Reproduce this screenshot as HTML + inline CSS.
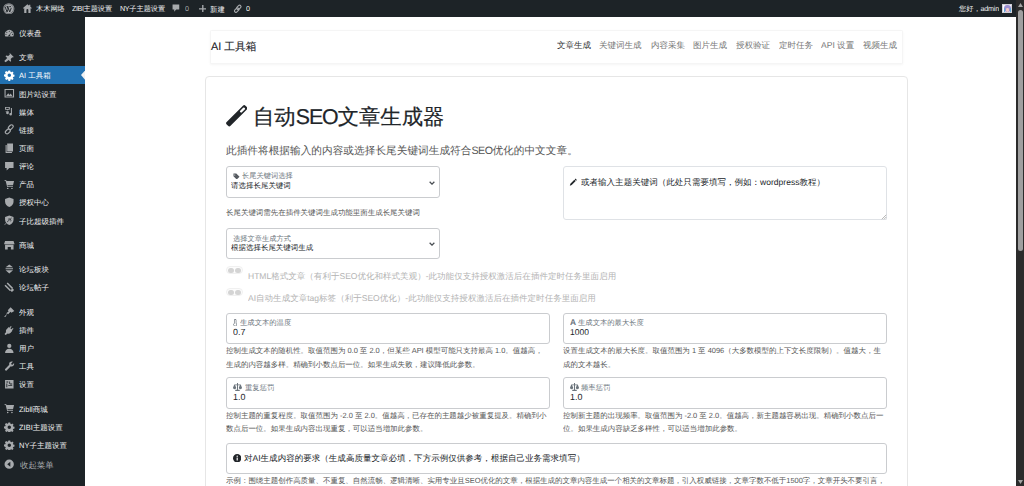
<!DOCTYPE html>
<html><head><meta charset="utf-8">
<style>
*{box-sizing:border-box;margin:0;padding:0}
html,body{width:1024px;height:486px;overflow:hidden;background:#fff;font-family:"Liberation Sans",sans-serif;color:#333}
.abs{position:absolute;white-space:nowrap}
.t{position:absolute;white-space:nowrap;transform:scale(0.125);transform-origin:0 0;text-rendering:geometricPrecision}
#bar{position:absolute;left:0;top:0;width:1016px;height:17.07px;background:#1d2327}
#side{position:absolute;left:0;top:17px;width:85.33px;height:469px;background:#1d2327}
.ic{position:absolute;fill:#a7aaad}
#sb{position:absolute;left:1016px;top:0;width:8px;height:486px;background:#2b2b2b}
.card{position:absolute;border:1px solid #e3e3e3;border-radius:4px;background:#fff}
.fl{position:absolute;border:1px solid #cacccf;border-radius:3px;background:#fff}
</style></head><body>
<div id="bar"><svg class="abs" style="left:3.3px;top:2.7px;width:11.6px;height:11.6px" viewBox="0 0 20 20"><circle cx="10" cy="10" r="9.600" fill="#a7aaad"/><circle cx="10" cy="10" r="8.300" fill="none" stroke="#1d2327" stroke-width="0.700"/><path d="M3.600 6.300L7 15.500 8.800 10.600 7.500 6.300M8.200 6.300L11.600 15.500 14.300 8.400M6.200 6.300h3.200M10.800 6.300h3" fill="none" stroke="#1d2327" stroke-width="1.600"/></svg><svg class="abs" style="left:23.2px;top:3.9px;width:8.8px;height:9.4px" viewBox="0 0 18 19"><path fill="#a7aaad" d="M9 0.500L0 8.300l1.300 1.400L2.500 8.700V18.500h13V8.700l1.200 1L18 8.300l-3-2.600V1.500h-2.500v2.100zM7 12.200a2 2 0 0 1 4 0v6.300H7z"/></svg><span class="t" style="left:35.80px;top:4.10px;font-size:57.60px;line-height:80.00px;color:#f0f0f1;">木木网络</span><span class="t" style="left:71.70px;top:4.10px;font-size:57.60px;line-height:80.00px;color:#f0f0f1;"><span style="letter-spacing:-3.5px">ZIBI</span>主题设置</span><span class="t" style="left:119.50px;top:4.10px;font-size:57.60px;line-height:80.00px;color:#f0f0f1;"><span style="letter-spacing:-3px">NY</span>子主题设置</span><svg class="abs" style="left:172.2px;top:4.3px;width:7.8px;height:8.6px" viewBox="0 0 16 18"><path fill="#a7aaad" d="M1 1h14v10.500H8.500L4.500 16v-4.500H1z"/></svg><span class="t" style="left:185.00px;top:4.10px;font-size:57.60px;line-height:80.00px;color:#a7aaad;">0</span><svg class="abs" style="left:198.6px;top:4.8px;width:7.6px;height:7.6px" viewBox="0 0 16 16"><path fill="#a7aaad" d="M6.600 0h2.800v6.600H16v2.800H9.400V16H6.600V9.400H0V6.600h6.600z"/></svg><span class="t" style="left:210.30px;top:4.10px;font-size:59.20px;line-height:80.00px;color:#f0f0f1;">新建</span><svg class="abs" style="left:233px;top:3.8px;width:9.5px;height:9.5px" viewBox="0 0 20 20"><g fill="none" stroke="#a7aaad" stroke-width="2.400"><rect x="9.300" y="1.800" width="6" height="10.500" rx="3" transform="rotate(45 12.300 7)"/><rect x="4.700" y="7.700" width="6" height="10.500" rx="3" transform="rotate(45 7.700 13)"/></g></svg><span class="t" style="left:245.90px;top:4.10px;font-size:57.60px;line-height:80.00px;color:#f0f0f1;">0</span><span class="t" style="left:958.70px;top:4.10px;font-size:57.60px;line-height:80.00px;color:#f0f0f1;">您好，<span style="letter-spacing:-2px">admin</span></span><div class="abs" style="left:1002px;top:3.6px;width:9.6px;height:9.6px;background:#f7f7fb;border:0.600px solid #cfcfd6;overflow:hidden"><div style="position:absolute;left:1.300px;top:0.900px;width:6.400px;height:6.800px;border-radius:50%;background:#9b8fd0"></div><div style="position:absolute;left:2.600px;top:3.500px;width:3.800px;height:3.600px;border-radius:50%;background:#f3c9c2"></div><div style="position:absolute;left:0.800px;top:3.600px;width:1.400px;height:4px;border-radius:1px;background:#5aa9d8"></div><div style="position:absolute;left:6.800px;top:3.600px;width:1.400px;height:4px;border-radius:1px;background:#5aa9d8"></div></div></div>
<div id="side"></div>
<svg class="abs" style="left:4.2px;top:27.50px;width:10.6px;height:10.6px;fill:#a7aaad" viewBox="0 0 20 20"><path d="M10 3.500a8.500 8.500 0 0 0-7.400 12.700h14.800A8.500 8.500 0 0 0 10 3.500zm0 1.800a1 1 0 1 1 0 2 1 1 0 0 1 0-2zM5.300 7.200a1 1 0 1 1 0 2 1 1 0 0 1 0-2zm9.400 0a1 1 0 1 1 0 2 1 1 0 0 1 0-2zM3.700 11a1 1 0 1 1 0 2 1 1 0 0 1 0-2zm12.600 0a1 1 0 1 1 0 2 1 1 0 0 1 0-2zM13.300 8l-2.100 5.500a1.800 1.800 0 1 1-1.400-.4z"/></svg>
<span class="t" style="left:19.10px;top:27.90px;font-size:60.00px;line-height:80.00px;color:#f0f0f1;">仪表盘</span>
<svg class="abs" style="left:4.2px;top:51.93px;width:10.6px;height:10.6px;fill:#a7aaad" viewBox="0 0 20 20"><path d="M10.400 1.600l8 8-1.400.8-1.200-.6-3.200 3.300.9 3.800-1.400 1.400-3.300-3.300L3 19.500.5 17l5.600-5.800L2.800 7.900l1.400-1.400 3.800.9 3.300-3.200-.6-1.200z"/></svg>
<span class="t" style="left:19.10px;top:52.33px;font-size:60.00px;line-height:80.00px;color:#f0f0f1;">文章</span>
<div class="abs" style="left:0;top:65.8px;width:85.33px;height:18.3px;background:#2271b1"></div>
<svg class="abs" style="left:81px;top:69.6px;width:4.4px;height:10.2px" viewBox="0 0 10 20" preserveAspectRatio="none"><path d="M10 0L0 10l10 10z" fill="#f0f0f1"/></svg>
<svg class="abs" style="left:4.2px;top:70.06px;width:10.6px;height:10.6px;fill:#fff" viewBox="0 0 20 20"><path d="M8.300 1h3.400l.5 2.500 1.400.6 2.100-1.400 2.400 2.400-1.400 2.100.6 1.400 2.500.5v3.400l-2.500.5-.6 1.400 1.400 2.100-2.400 2.400-2.100-1.400-1.400.6-.5 2.500H8.300l-.5-2.500-1.400-.6-2.100 1.400-2.400-2.400 1.400-2.100-.6-1.400L0 11.700V8.300l2.500-.5.6-1.400-1.400-2.100 2.400-2.400 2.100 1.400 1.400-.6zM10 6.700a3.300 3.300 0 1 0 0 6.600 3.300 3.300 0 0 0 0-6.600z"/></svg>
<span class="t" style="left:19.10px;top:70.46px;font-size:60.00px;line-height:80.00px;color:#fff;">AI 工具箱</span>
<svg class="abs" style="left:4.2px;top:88.19px;width:10.6px;height:10.6px;fill:#a7aaad" viewBox="0 0 20 20"><path d="M1 2h18v16H1zm2 2v12h14V4zm1 11l4-5 2.500 3 2-2.500L16 15z"/></svg>
<span class="t" style="left:19.10px;top:88.59px;font-size:60.00px;line-height:80.00px;color:#f0f0f1;">图片站设置</span>
<svg class="abs" style="left:4.2px;top:106.32px;width:10.6px;height:10.6px;fill:#a7aaad" viewBox="0 0 20 20"><path d="M2 2h9v5H8l-1 2-1-2H2zm2 1.500v2h5v-2zM13 4h2v11.500a2.500 2.500 0 1 1-2-2.400zM3 10h6v3a2.500 2.500 0 1 1-2-2.400V11H3z"/></svg>
<span class="t" style="left:19.10px;top:106.72px;font-size:60.00px;line-height:80.00px;color:#f0f0f1;">媒体</span>
<svg class="abs" style="left:4.2px;top:124.45px;width:10.6px;height:10.6px;fill:#a7aaad" viewBox="0 0 20 20"><g fill="none" stroke="#a7aaad" stroke-width="2.200"><rect x="9.600" y="0.800" width="6.400" height="10.400" rx="3.200" transform="rotate(45 12.800 6)"/><rect x="4" y="8.800" width="6.400" height="10.400" rx="3.200" transform="rotate(45 7.200 14)"/></g></svg>
<span class="t" style="left:19.10px;top:124.85px;font-size:60.00px;line-height:80.00px;color:#f0f0f1;">链接</span>
<svg class="abs" style="left:4.2px;top:142.58px;width:10.6px;height:10.6px;fill:#a7aaad" viewBox="0 0 20 20"><path d="M6 1h11v15H6zM3 4h2v13h10v2H3z"/></svg>
<span class="t" style="left:19.10px;top:142.98px;font-size:60.00px;line-height:80.00px;color:#f0f0f1;">页面</span>
<svg class="abs" style="left:4.2px;top:160.71px;width:10.6px;height:10.6px;fill:#a7aaad" viewBox="0 0 20 20"><path d="M2 2h16v11H10l-5 5v-5H2z"/></svg>
<span class="t" style="left:19.10px;top:161.11px;font-size:60.00px;line-height:80.00px;color:#f0f0f1;">评论</span>
<svg class="abs" style="left:4.2px;top:178.84px;width:10.6px;height:10.6px;fill:#a7aaad" viewBox="0 0 20 20"><path d="M1 2h3l.800 2H19l-2 8H6.500l.500 1.500h10v1.500H6L3 3.500H1zm6 14.500a1.500 1.500 0 1 1 0 3 1.500 1.500 0 0 1 0-3zm8 0a1.500 1.500 0 1 1 0 3 1.500 1.500 0 0 1 0-3z"/></svg>
<span class="t" style="left:19.10px;top:179.24px;font-size:60.00px;line-height:80.00px;color:#f0f0f1;">产品</span>
<svg class="abs" style="left:4.2px;top:196.97px;width:10.6px;height:10.6px;fill:#a7aaad" viewBox="0 0 20 20"><path d="M10 1l8 3v5c0 5-3.500 8.500-8 10-4.500-1.500-8-5-8-10V4z"/></svg>
<span class="t" style="left:19.10px;top:197.37px;font-size:60.00px;line-height:80.00px;color:#f0f0f1;">授权中心</span>
<svg class="abs" style="left:4.2px;top:215.10px;width:10.6px;height:10.6px;fill:#a7aaad" viewBox="0 0 20 20"><path d="M10 1l8 3v5c0 5-3.500 8.500-8 10-4.500-1.500-8-5-8-10V4z"/><path d="M5.500 13.500L14.500 5.500M7.500 8.500a3 3 0 0 1 5 3.500" fill="none" stroke="#1d2327" stroke-width="1.300"/><path d="M1 19L5 14" stroke="#a7aaad" stroke-width="1.200"/></svg>
<span class="t" style="left:19.10px;top:215.50px;font-size:60.00px;line-height:80.00px;color:#f0f0f1;">子比超级插件</span>
<svg class="abs" style="left:4.2px;top:239.53px;width:10.6px;height:10.6px;fill:#a7aaad" viewBox="0 0 20 20"><path d="M2 2h16l2 6H0zm0 7h16v9h-5v-5H7v5H2z"/></svg>
<span class="t" style="left:19.10px;top:239.93px;font-size:60.00px;line-height:80.00px;color:#f0f0f1;">商城</span>
<svg class="abs" style="left:4.2px;top:263.96px;width:10.6px;height:10.6px;fill:#a7aaad" viewBox="0 0 20 20"><path d="M10 1l7 5H3zM3 8h14v2H3zm0 4h14l-7 6z"/></svg>
<span class="t" style="left:19.10px;top:264.36px;font-size:60.00px;line-height:80.00px;color:#f0f0f1;">论坛板块</span>
<svg class="abs" style="left:4.2px;top:282.09px;width:10.6px;height:10.6px;fill:#a7aaad" viewBox="0 0 20 20"><path d="M7 1l10 10-2 2L5 3zM3 5l10 10-2 2L1 7zm13 7l3 3-4 4-3-3z"/></svg>
<span class="t" style="left:19.10px;top:282.49px;font-size:60.00px;line-height:80.00px;color:#f0f0f1;">论坛帖子</span>
<svg class="abs" style="left:4.2px;top:306.52px;width:10.6px;height:10.6px;fill:#a7aaad" viewBox="0 0 20 20"><path d="M12.500 0.500l7 7-5.500 3.500-1.800-1.800-4.200 4.500-1.300-1.300L2.200 19.500 0.500 17.800l5.200-4.500-1.300-1.300 4.500-4.200L7.100 6z"/></svg>
<span class="t" style="left:19.10px;top:306.92px;font-size:60.00px;line-height:80.00px;color:#f0f0f1;">外观</span>
<svg class="abs" style="left:4.2px;top:324.65px;width:10.6px;height:10.6px;fill:#a7aaad" viewBox="0 0 20 20"><path d="M13 2l1.500 1.500L12 6l2 2 2.500-2.500L18 7l-3 3 1 1-4 4c-1.500 1.500-3.500 1.800-5 1L3 19l-2-2 3-4c-.800-1.500-.500-3.500 1-5l4-4 1 1z"/></svg>
<span class="t" style="left:19.10px;top:325.05px;font-size:60.00px;line-height:80.00px;color:#f0f0f1;">插件</span>
<svg class="abs" style="left:4.2px;top:342.78px;width:10.6px;height:10.6px;fill:#a7aaad" viewBox="0 0 20 20"><path d="M10 1.500a4 4 0 1 1 0 8 4 4 0 0 1 0-8zM2 19c0-4.500 3-8 8-8s8 3.500 8 8z"/></svg>
<span class="t" style="left:19.10px;top:343.18px;font-size:60.00px;line-height:80.00px;color:#f0f0f1;">用户</span>
<svg class="abs" style="left:4.2px;top:360.91px;width:10.6px;height:10.6px;fill:#a7aaad" viewBox="0 0 20 20"><path d="M16.500 1.500l-3 3 .500 2 2 .500 3-3c.800 2.800-.800 6-4 6.300-.800.100-1.500 0-2.200-.300L5 17.800a2 2 0 0 1-2.800-2.800l7.800-7.800c-.300-.700-.400-1.400-.300-2.200.300-3.200 3.500-4.800 6.300-4z"/></svg>
<span class="t" style="left:19.10px;top:361.31px;font-size:60.00px;line-height:80.00px;color:#f0f0f1;">工具</span>
<svg class="abs" style="left:4.2px;top:379.04px;width:10.6px;height:10.6px;fill:#a7aaad" viewBox="0 0 20 20"><path d="M2 2h16v16H2zm2.500 2.500v2h3.500v-2zm5.500 0v5h1.500V4.500zm-5.500 4v7h1.700v-7zm3.500 3.200v1.700h7.500v-1.700zm3.500-3.200v1.700h4v-1.700z" fill-rule="evenodd"/></svg>
<span class="t" style="left:19.10px;top:379.44px;font-size:60.00px;line-height:80.00px;color:#f0f0f1;">设置</span>
<svg class="abs" style="left:4.2px;top:403.47px;width:10.6px;height:10.6px;fill:#a7aaad" viewBox="0 0 20 20"><path d="M1 2h3l.800 2H19l-2 8H6.500l.500 1.500h10v1.500H6L3 3.500H1zm6 14.500a1.500 1.500 0 1 1 0 3 1.500 1.500 0 0 1 0-3zm8 0a1.500 1.500 0 1 1 0 3 1.500 1.500 0 0 1 0-3z"/></svg>
<span class="t" style="left:19.10px;top:403.87px;font-size:60.00px;line-height:80.00px;color:#f0f0f1;">Zibll商城</span>
<svg class="abs" style="left:4.2px;top:421.60px;width:10.6px;height:10.6px;fill:#a7aaad" viewBox="0 0 20 20"><path d="M8.300 1h3.400l.5 2.500 1.400.6 2.100-1.400 2.400 2.400-1.400 2.100.6 1.400 2.500.5v3.400l-2.500.5-.6 1.400 1.400 2.100-2.400 2.400-2.100-1.400-1.400.6-.5 2.500H8.300l-.5-2.500-1.400-.6-2.100 1.400-2.400-2.400 1.400-2.100-.6-1.400L0 11.700V8.300l2.500-.5.6-1.400-1.400-2.100 2.400-2.400 2.100 1.400 1.400-.6zM10 6.700a3.300 3.300 0 1 0 0 6.600 3.300 3.300 0 0 0 0-6.600z"/></svg>
<span class="t" style="left:19.10px;top:422.00px;font-size:60.00px;line-height:80.00px;color:#f0f0f1;">ZIBI主题设置</span>
<svg class="abs" style="left:4.2px;top:439.73px;width:10.6px;height:10.6px;fill:#a7aaad" viewBox="0 0 20 20"><path d="M8.300 1h3.400l.5 2.500 1.400.6 2.100-1.400 2.400 2.400-1.400 2.100.6 1.400 2.500.5v3.400l-2.500.5-.6 1.400 1.400 2.100-2.400 2.400-2.100-1.400-1.400.6-.5 2.500H8.300l-.5-2.500-1.400-.6-2.100 1.400-2.400-2.400 1.400-2.100-.6-1.400L0 11.700V8.300l2.500-.5.6-1.400-1.400-2.100 2.400-2.400 2.100 1.400 1.400-.6zM10 6.700a3.300 3.300 0 1 0 0 6.600 3.300 3.300 0 0 0 0-6.600z"/></svg>
<span class="t" style="left:19.10px;top:440.13px;font-size:60.00px;line-height:80.00px;color:#f0f0f1;">NY子主题设置</span>
<svg class="abs" style="left:4.1px;top:458.90px;width:10.4px;height:10.4px;fill:#a7aaad" viewBox="0 0 20 20"><path d="M10 1a9 9 0 1 1 0 18 9 9 0 0 1 0-18zm2.200 4.300L6.200 10l6 4.700z"/></svg>
<span class="t" style="left:19.60px;top:459.60px;font-size:67.20px;line-height:80.00px;color:#a7aaad;">收起菜单</span>
<div id="sb"><svg class="abs" style="left:1.500px;top:2.500px;width:5px;height:4px" viewBox="0 0 10 8"><path d="M5 0l5 8H0z" fill="#a3a3a3"/></svg><div class="abs" style="left:1.500px;top:10px;width:5px;height:241px;border-radius:2.500px;background:#9f9f9f"></div><svg class="abs" style="left:1.500px;top:479.500px;width:5px;height:4px" viewBox="0 0 10 8"><path d="M0 0h10L5 8z" fill="#a3a3a3"/></svg></div>
<div class="card" style="left:209.8px;top:29.6px;width:693.3px;height:34.2px;border-color:#f5f5f5;border-radius:1.5px;box-shadow:0 1px 2.5px rgba(0,0,0,.045)"></div>
<span class="t" style="left:210.60px;top:40.30px;font-size:86.40px;line-height:96.00px;color:#1d2327;-webkit-text-stroke:1px #1d2327">AI 工具箱</span>
<div class="card" style="left:204.6px;top:75.5px;width:703.6px;height:430px;border-color:#e6e6e6"></div>
<span class="t" style="left:556.70px;top:40.30px;font-size:68.24px;line-height:80.00px;color:#333;">文章生成</span>
<span class="t" style="left:599.40px;top:40.30px;font-size:68.24px;line-height:80.00px;color:#777;">关键词生成</span>
<span class="t" style="left:650.60px;top:40.30px;font-size:68.24px;line-height:80.00px;color:#777;">内容采集</span>
<span class="t" style="left:693.20px;top:40.30px;font-size:68.24px;line-height:80.00px;color:#777;">图片生成</span>
<span class="t" style="left:735.90px;top:40.30px;font-size:68.24px;line-height:80.00px;color:#777;">授权验证</span>
<span class="t" style="left:778.60px;top:40.30px;font-size:68.24px;line-height:80.00px;color:#777;">定时任务</span>
<span class="t" style="left:821.30px;top:40.30px;font-size:68.24px;line-height:80.00px;color:#777;">API 设置</span>
<span class="t" style="left:862.80px;top:40.30px;font-size:68.24px;line-height:80.00px;color:#777;">视频生成</span>
<svg class="abs" style="left:225.7px;top:105.3px;width:21.5px;height:21.5px" viewBox="0 0 22 22"><g transform="rotate(45 11 11)"><rect x="8.200" y="-2.600" width="5.600" height="27.200" rx="1.800" fill="#212529"/><rect x="9.800" y="-0.400" width="2.400" height="6.200" rx="1" fill="#fff"/></g></svg>
<span class="t" style="left:252.50px;top:102.00px;font-size:170.64px;line-height:240.00px;color:#212529;-webkit-text-stroke:1.6px #212529">自动<span style="letter-spacing:-8px">SEO</span>文章生成器</span>
<span class="t" style="left:226.00px;top:143.20px;font-size:85.36px;line-height:112.00px;color:#555;">此插件将根据输入的内容或选择长尾关键词生成符合<span style="letter-spacing:-4px">SEO</span>优化的中文文章。</span>
<div class="fl" style="left:226px;top:166.1px;width:213.8px;height:31.6px"></div>
<svg class="abs" style="left:232.6px;top:172.6px;width:7px;height:6.5px" viewBox="0 0 16 15"><path d="M1 1h6.500L15 8.500 8.500 15 1 7.500zm3 2.200a1.200 1.200 0 1 0 0 2.400 1.200 1.200 0 0 0 0-2.400z" fill="#555a60"/></svg>
<span class="t" style="left:242.20px;top:171.30px;font-size:58.00px;line-height:80.00px;color:#6c757d;">长尾关键词选择</span>
<span class="t" style="left:231.00px;top:179.50px;font-size:59.84px;line-height:80.00px;color:#212529;">请选择长尾关键词</span>
<svg class="abs" style="left:428.9px;top:180.6px;width:6px;height:4px" viewBox="0 0 12 8"><path d="M1.300 1.600l4.700 4.600 4.700-4.600" fill="none" stroke="#4a4f54" stroke-width="2.600"/></svg>
<span class="t" style="left:226.00px;top:207.20px;font-size:59.68px;line-height:80.00px;color:#555;">长尾关键词需先在插件关键词生成功能里面生成长尾关键词</span>
<div class="fl" style="left:226px;top:228px;width:213.8px;height:31.4px"></div>
<span class="t" style="left:232.80px;top:233.80px;font-size:58.00px;line-height:80.00px;color:#6c757d;">选择文章生成方式</span>
<span class="t" style="left:231.00px;top:241.90px;font-size:59.84px;line-height:80.00px;color:#212529;">根据选择长尾关键词生成</span>
<svg class="abs" style="left:428.9px;top:241.8px;width:6px;height:4px" viewBox="0 0 12 8"><path d="M1.300 1.600l4.700 4.600 4.700-4.600" fill="none" stroke="#4a4f54" stroke-width="2.600"/></svg>
<div class="fl" style="left:562.5px;top:166px;width:324.2px;height:53.9px;border-color:#dfe2e6;border-bottom-right-radius:1px"></div>
<svg class="abs" style="left:569px;top:177.6px;width:8.8px;height:8.2px" viewBox="0 0 16 16"><path d="M12.100 1.200l2.700 2.700-1.500 1.500-2.700-2.700zM9.800 3.400l2.700 2.700-7.800 7.800L1 15l1.100-3.700z" fill="#212529"/></svg>
<span class="t" style="left:580.80px;top:177.30px;font-size:68.24px;line-height:80.00px;color:#212529;">或者输入主题关键词（此处只需要填写，例如：wordpress教程）</span>
<svg class="abs" style="left:881px;top:214px;width:5.5px;height:5.5px" viewBox="0 0 10 10"><path d="M9.500 1.500L1.500 9.500M9.500 5.500L5.500 9.500" stroke="#9a9a9a" stroke-width="1.300"/></svg>
<div class="abs" style="left:226.2px;top:265.9px;width:17px;height:8.2px;border-radius:4.100px;border:0.600px solid #f0f0f0;background:#fcfcfc"><span style="position:absolute;left:1.200px;top:1.050px;width:5.200px;height:5.200px;border-radius:50%;background:#d4d4d4"></span><span style="position:absolute;left:8.200px;top:1.050px;width:5.200px;height:5.200px;border-radius:50%;background:#d4d4d4"></span></div>
<span class="t" style="left:247.90px;top:270.60px;font-size:68.24px;line-height:80.00px;color:#b3b3b3;">HTML格式文章（有利于SEO优化和样式美观）-此功能仅支持授权激活后在插件定时任务里面启用</span>
<div class="abs" style="left:226.2px;top:288.1px;width:17px;height:8.2px;border-radius:4.100px;border:0.600px solid #f0f0f0;background:#fcfcfc"><span style="position:absolute;left:1.200px;top:1.050px;width:5.200px;height:5.200px;border-radius:50%;background:#d4d4d4"></span><span style="position:absolute;left:8.200px;top:1.050px;width:5.200px;height:5.200px;border-radius:50%;background:#d4d4d4"></span></div>
<span class="t" style="left:247.90px;top:292.80px;font-size:68.24px;line-height:80.00px;color:#b3b3b3;">AI自动生成文章tag标签（利于SEO优化）-此功能仅支持授权激活后在插件定时任务里面启用</span>
<div class="fl" style="left:226px;top:312.5px;width:324.2px;height:31.4px"></div>
<svg class="abs" style="left:233px;top:318.6px;width:4.4px;height:7.4px" viewBox="0 0 8 14"><path d="M4 0a2.300 2.300 0 0 1 2.300 2.300v5.600a3.400 3.400 0 1 1-4.600 0V2.300A2.300 2.300 0 0 1 4 0zm0 1.300a1 1 0 0 0-1 1v6.300a2.200 2.200 0 1 0 2 0V2.300a1 1 0 0 0-1-1z" fill="#6c757d"/></svg>
<span class="t" style="left:240.10px;top:318.10px;font-size:58.56px;line-height:80.00px;color:#6c757d;">生成文本的温度</span>
<span class="t" style="left:232.60px;top:326.60px;font-size:71.20px;line-height:80.00px;color:#212529;">0.7</span>
<span class="t" style="left:226.00px;top:345.30px;font-size:59.68px;line-height:80.00px;color:#555;">控制生成文本的随机性。取值范围为 0.0 至 2.0，但某些 API 模型可能只支持最高 1.0。值越高，</span>
<span class="t" style="left:226.00px;top:358.50px;font-size:59.68px;line-height:80.00px;color:#555;">生成的内容越多样。精确到小数点后一位。如果生成失败，建议降低此参数。</span>
<div class="fl" style="left:562.5px;top:312.5px;width:324.2px;height:31.4px"></div>
<span class="t" style="left:569.60px;top:317.30px;font-size:67.20px;line-height:80.00px;color:#6c757d;font-weight:bold">A</span>
<span class="t" style="left:578.00px;top:318.10px;font-size:58.56px;line-height:80.00px;color:#6c757d;">生成文本的最大长度</span>
<span class="t" style="left:569.60px;top:327.40px;font-size:68.00px;line-height:80.00px;color:#212529;">1000</span>
<span class="t" style="left:562.50px;top:345.30px;font-size:59.68px;line-height:80.00px;color:#555;">设置生成文本的最大长度。取值范围为 1 至 4096（大多数模型的上下文长度限制）。值越大，生</span>
<span class="t" style="left:562.50px;top:358.50px;font-size:59.68px;line-height:80.00px;color:#555;">成的文本越长。</span>
<div class="fl" style="left:226px;top:377.4px;width:324.2px;height:31.5px"></div>
<svg class="abs" style="left:232.9px;top:383.3px;width:9px;height:8px" viewBox="0 0 18 16"><path d="M8 0h2v3h5.500l2.500 6.500c0 1.700-1.500 2.800-3.200 2.800S11.600 11.200 11.600 9.500L13.800 4.600H10V13.500h3.500V16h-9v-2.500H8V4.600H4.200L6.400 9.500c0 1.700-1.500 2.800-3.200 2.800S0 11.200 0 9.500L2.500 3H8z" fill="#6c757d"/><path d="M1.300 9.300h3.800L3.200 5zm11.600 0h3.800L14.800 5z" fill="#6c757d"/></svg>
<span class="t" style="left:244.50px;top:382.60px;font-size:58.56px;line-height:80.00px;color:#6c757d;">重复惩罚</span>
<span class="t" style="left:232.60px;top:391.90px;font-size:71.20px;line-height:80.00px;color:#212529;">1.0</span>
<span class="t" style="left:226.00px;top:410.30px;font-size:59.68px;line-height:80.00px;color:#555;">控制主题的重复程度。取值范围为 -2.0 至 2.0。值越高，已存在的主题越少被重复提及。精确到小</span>
<span class="t" style="left:226.00px;top:423.40px;font-size:59.68px;line-height:80.00px;color:#555;">数点后一位。如果生成内容出现重复，可以适当增加此参数。</span>
<div class="fl" style="left:562.5px;top:377.4px;width:324.2px;height:31.5px"></div>
<svg class="abs" style="left:569.6px;top:383.3px;width:9px;height:8px" viewBox="0 0 18 16"><path d="M8 0h2v3h5.500l2.500 6.500c0 1.700-1.500 2.800-3.200 2.800S11.600 11.200 11.600 9.500L13.800 4.600H10V13.500h3.500V16h-9v-2.500H8V4.600H4.200L6.400 9.500c0 1.700-1.500 2.800-3.200 2.800S0 11.200 0 9.500L2.500 3H8z" fill="#6c757d"/><path d="M1.300 9.300h3.800L3.200 5zm11.600 0h3.800L14.800 5z" fill="#6c757d"/></svg>
<span class="t" style="left:580.70px;top:382.60px;font-size:58.56px;line-height:80.00px;color:#6c757d;">频率惩罚</span>
<span class="t" style="left:569.60px;top:391.90px;font-size:71.20px;line-height:80.00px;color:#212529;">1.0</span>
<span class="t" style="left:562.50px;top:410.30px;font-size:59.68px;line-height:80.00px;color:#555;">控制新主题的出现频率。取值范围为 -2.0 至 2.0。值越高，新主题越容易出现。精确到小数点后一</span>
<span class="t" style="left:562.50px;top:423.40px;font-size:59.68px;line-height:80.00px;color:#555;">位。如果生成内容缺乏多样性，可以适当增加此参数。</span>
<div class="fl" style="left:226px;top:442.6px;width:660.7px;height:31.3px"></div>
<svg class="abs" style="left:232.8px;top:453.7px;width:8.4px;height:8.4px" viewBox="0 0 16 16"><circle cx="8" cy="8" r="8" fill="#212529"/><rect x="6.900" y="6.800" width="2.200" height="5.600" fill="#fff"/><circle cx="8" cy="4.300" r="1.300" fill="#fff"/></svg>
<span class="t" style="left:243.80px;top:452.60px;font-size:68.24px;line-height:88.00px;color:#212529;">对AI生成内容的要求（生成高质量文章必填，下方示例仅供参考，根据自己业务需求填写）</span>
<span class="t" style="left:226.00px;top:474.60px;font-size:59.68px;line-height:80.00px;color:#555;">示例：围绕主题创作高质量、不重复、自然流畅、逻辑清晰、实用专业且SEO优化的文章，根据生成的文章内容生成一个相关的文章标题，引入权威链接，文章字数不低于1500字，文章开头不要引言，</span>
</body></html>
